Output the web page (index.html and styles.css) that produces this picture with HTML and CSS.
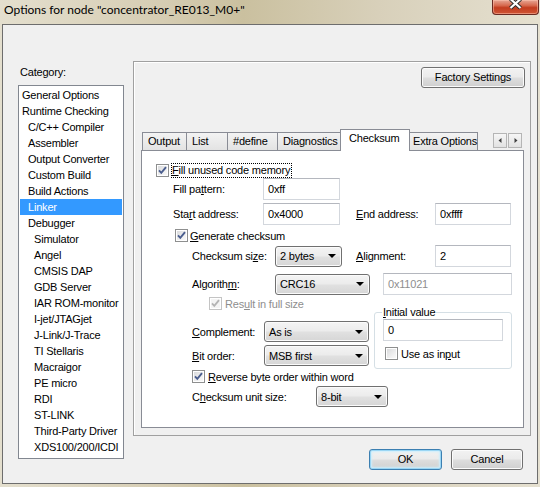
FILE: index.html
```html
<!DOCTYPE html>
<html>
<head>
<meta charset="utf-8">
<link rel="stylesheet" href="styles.css">
</head>
<body>
<div class="window">
  <div class="titlebar">
    <span class="title">Options for node "concentrator_RE013_M0+"</span>
    <div class="close">
      <svg width="45" height="14" viewBox="0 0 45 14"><path d="M17.5 -1 L27.5 8 M27.5 -1 L17.5 8" stroke="#2e2e2e" stroke-width="4.2" fill="none"/><path d="M17.5 -1 L27.5 8 M27.5 -1 L17.5 8" stroke="#fff" stroke-width="2.2" fill="none"/></svg>
    </div>
  </div>
  <div class="client">
    <div class="left">
      <div class="cat-label">Category:</div>
      <ul class="cat-list">
        <li class="l0">General Options</li>
        <li class="l0">Runtime Checking</li>
        <li class="l1">C/C++ Compiler</li>
        <li class="l1">Assembler</li>
        <li class="l1">Output Converter</li>
        <li class="l1">Custom Build</li>
        <li class="l1">Build Actions</li>
        <li class="l1 sel">Linker</li>
        <li class="l1">Debugger</li>
        <li class="l2">Simulator</li>
        <li class="l2">Angel</li>
        <li class="l2">CMSIS DAP</li>
        <li class="l2">GDB Server</li>
        <li class="l2">IAR ROM-monitor</li>
        <li class="l2">I-jet/JTAGjet</li>
        <li class="l2">J-Link/J-Trace</li>
        <li class="l2">TI Stellaris</li>
        <li class="l2">Macraigor</li>
        <li class="l2">PE micro</li>
        <li class="l2">RDI</li>
        <li class="l2">ST-LINK</li>
        <li class="l2">Third-Party Driver</li>
        <li class="l2">XDS100/200/ICDI</li>
      </ul>
    </div>
    <div class="right">
      <div class="panel">
        <div class="factory-row"><div class="btn factory">Factory Settings</div></div>
        <div class="tabs">
          <div class="tab t-output">Output</div>
          <div class="tab t-list">List</div>
          <div class="tab t-define">#define</div>
          <div class="tab t-diag">Diagnostics</div>
          <div class="tab t-check sel">Checksum</div>
          <div class="tab t-extra">Extra Options</div>
          <div class="spin">
            <div class="spin-btn"><svg width="13" height="13" viewBox="0 0 13 13"><path d="M7.5 4 L4.5 6.5 L7.5 9 Z" fill="#404040"/></svg></div>
            <div class="spin-btn"><svg width="13" height="13" viewBox="0 0 13 13"><path d="M5.5 4 L8.5 6.5 L5.5 9 Z" fill="#404040"/></svg></div>
          </div>
        </div>
        <div class="tab-content">
          <div class="row r-fill">
            <span class="cb"><svg width="11" height="11" viewBox="0 0 11 11"><path d="M2 5.3 L4.3 7.8 L9 2.2" fill="none" stroke="#4a5d8e" stroke-width="1.9"/></svg></span>
            <span class="focus"><u>F</u>ill unused code memory</span>
          </div>
          <div class="row r-pattern">
            <span class="lab lab-a">Fill pa<u>t</u>tern:</span>
            <div class="tb w77">0xff</div>
          </div>
          <div class="row r-start">
            <span class="lab lab-a">Sta<u>r</u>t address:</span>
            <div class="tb w77">0x4000</div>
            <span class="lab lab-b"><u>E</u>nd address:</span>
            <div class="tb w76">0xffff</div>
          </div>
          <div class="row r-gen">
            <span class="cb"><svg width="11" height="11" viewBox="0 0 11 11"><path d="M2 5.3 L4.3 7.8 L9 2.2" fill="none" stroke="#4a5d8e" stroke-width="1.9"/></svg></span>
            <span class="cb-text"><u>G</u>enerate checksum</span>
          </div>
          <div class="row r-size">
            <span class="lab lab-c">Checksum si<u>z</u>e:</span>
            <div class="combo w67"><span>2 bytes</span><i class="arr"></i></div>
            <span class="lab lab-d"><u>A</u>lignment:</span>
            <div class="tb w76">2</div>
          </div>
          <div class="row r-alg">
            <span class="lab lab-c">Algorith<u>m</u>:</span>
            <div class="combo w95"><span>CRC16</span><i class="arr"></i></div>
            <div class="tb w129 dis">0x11021</div>
          </div>
          <div class="row r-result">
            <span class="cb dis"><svg width="11" height="11" viewBox="0 0 11 11"><path d="M2 5.3 L4.3 7.8 L9 2.2" fill="none" stroke="#b4b4b4" stroke-width="1.9"/></svg></span>
            <span class="cb-text dis">Res<u>u</u>lt in full size</span>
          </div>
          <div class="blk">
            <div class="blk-left">
              <div class="row r-comp">
                <span class="lab lab-e"><u>C</u>omplement:</span>
                <div class="combo w105"><span>As is</span><i class="arr"></i></div>
              </div>
              <div class="row r-bit">
                <span class="lab lab-e"><u>B</u>it order:</span>
                <div class="combo w105"><span>MSB first</span><i class="arr"></i></div>
              </div>
            </div>
            <fieldset class="group">
              <legend><u>I</u>nitial value</legend>
              <div class="tb w120">0</div>
              <div class="row r-use">
                <span class="cb"></span>
                <span class="cb-text">Use as in<u>p</u>ut</span>
              </div>
            </fieldset>
          </div>
          <div class="row r-rev">
            <span class="cb"><svg width="11" height="11" viewBox="0 0 11 11"><path d="M2 5.3 L4.3 7.8 L9 2.2" fill="none" stroke="#4a5d8e" stroke-width="1.9"/></svg></span>
            <span class="cb-text"><u>R</u>everse byte order within word</span>
          </div>
          <div class="row r-unit">
            <span class="lab lab-f">C<u>h</u>ecksum unit size:</span>
            <div class="combo w72"><span>8-bit</span><i class="arr"></i></div>
          </div>
        </div>
      </div>
      <div class="actions">
        <div class="btn ok">OK</div>
        <div class="btn cancel">Cancel</div>
      </div>
    </div>
  </div>
</div>
</body>
</html>
```

FILE: styles.css
```css
* { box-sizing: border-box; }
html, body { margin: 0; padding: 0; }
body {
  width: 540px;
  height: 487px;
  overflow: hidden;
  font-family: "Liberation Sans", Arial, sans-serif;
  font-size: 11px;
  letter-spacing: -0.2px;
  color: #000;
  background: #ddd7c5;
}
u { text-decoration: underline; text-underline-offset: 1px; }

.window {
  width: 540px;
  height: 487px;
  background: linear-gradient(to right, #e4dfce 0%, #d6cdb3 30%, #cac09f 45%, #d8d0ba 70%, #e5e0d0 100%);
}

/* title bar */
.titlebar {
  height: 24px;
  display: flex;
  align-items: flex-start;
}
.title {
  font-family: Lato, "Open Sans", sans-serif;
  font-size: 12px;
  letter-spacing: 0;
  line-height: 20px;
  padding-left: 4px;
  white-space: nowrap;
}
.close {
  margin-left: auto;
  margin-right: 1px;
  width: 47px;
  height: 15px;
  border: 1px solid #6a2a22;
  border-top: none;
  border-radius: 0 0 4px 4px;
  background: linear-gradient(#e7a795 0%, #d6684d 40%, #c33d20 55%, #cf5535 100%);
  box-shadow: inset 0 0 0 1px rgba(255, 200, 180, 0.5);
}
.close svg { display: block; }

/* client area */
.client {
  margin-left: 2px;
  width: 536px;
  height: 460px;
  border: 1px solid #6d6d6d;
  background: #f0f0f0;
  display: flex;
  padding-top: 36px;
}

.left {
  margin-left: 15px;
  width: 106px;
}
.cat-label {
  margin-top: 5px;
  padding-left: 2px;
  height: 13px;
  line-height: 13px;
}
.cat-list {
  list-style: none;
  margin: 6px 0 0 0;
  padding: 1px;
  height: 374px;
  border: 1px solid #828790;
  background: #fff;
  overflow: hidden;
}
.cat-list li {
  height: 16px;
  line-height: 16px;
  white-space: nowrap;
  overflow: hidden;
  margin: 0;
}
.cat-list .l0 { padding-left: 2px; }
.cat-list .l1 { padding-left: 8px; }
.cat-list .l2 { padding-left: 14px; }
.cat-list .sel { background: #3399ff; color: #fff; }

/* right column */
.right {
  margin-left: 9px;
  width: 398px;
}
.panel {
  width: 398px;
  height: 375px;
  border: 1px solid #a0a0a0;
  box-shadow: inset 1px 1px 0 #fff;
  padding: 5px 5px 0 0;
}
.factory-row {
  display: flex;
  justify-content: flex-end;
}
.btn {
  height: 21px;
  line-height: 19px;
  text-align: center;
  border: 1px solid #707070;
  border-radius: 3px;
  background: linear-gradient(#f2f2f2 0%, #ebebeb 45%, #dddddd 55%, #cfcfcf 100%);
  box-shadow: inset 0 0 0 1px #fbfbfb;
}
.factory { width: 104px; }

/* tabs */
.tabs {
  margin: 41px 0 0 7px;
  width: 383px;
  height: 21px;
  display: flex;
  align-items: flex-end;
}
.tab {
  height: 18px;
  line-height: 16px;
  border: 1px solid #898c95;
  border-bottom: none;
  background: linear-gradient(#f3f3f3, #e3e3e3);
  padding-left: 5px;
  white-space: nowrap;
}
.t-output { width: 45px; margin-left: 1px; }
.t-list { width: 42px; margin-left: -1px; }
.t-define { width: 51px; margin-left: -1px; }
.t-diag { width: 66px; margin-left: -1px; }
.t-check { width: 70px; margin-left: -3px; }
.t-extra { width: 71px; margin-left: -3px; }
.tab.sel {
  height: 22px;
  margin-bottom: -1px;
  background: #fff;
  position: relative;
  z-index: 1;
  line-height: 17px;
  padding-left: 8px;
}
.spin {
  margin-left: auto;
  margin-right: 2px;
  align-self: flex-start;
  margin-top: 4px;
  display: flex;
  gap: 1px;
}
.spin-btn {
  width: 14px;
  height: 15px;
  border: 1px solid #b5b5b5;
  background: linear-gradient(#f6f6f6, #e2e2e2);
}
.spin-btn svg { display: block; }

.tab-content {
  margin-left: 7px;
  width: 383px;
  height: 278px;
  border: 1px solid #898c95;
  background: #fff;
  padding-top: 12px;
}

.row {
  display: flex;
  align-items: center;
  white-space: nowrap;
}

/* checkboxes */
.cb {
  flex: none;
  width: 13px;
  height: 13px;
  border: 1px solid #8e8f8f;
  background: linear-gradient(135deg, #d6d7d9 0%, #f3f3f3 70%, #fafafa 100%);
  box-shadow: inset 0 0 0 1px #fff;
}
.cb svg { display: block; }
.cb.dis { border-color: #c4c4c4; background: #f4f4f4; }
.cb-text { margin-left: 3px; }
.dis { color: #8e8e8e; }

.focus {
  margin-left: 2px;
  height: 15px;
  line-height: 13px;
  border: 1px dotted #000;
  padding-right: 1px;
}

.lab { flex: none; }
.lab-a { margin-left: 31px; width: 90px; }
.lab-b { margin-left: 16px; width: 79px; }
.lab-c { margin-left: 50px; width: 83px; }
.lab-d { margin-left: 14px; width: 79px; }
.lab-e { margin-left: 50px; width: 72px; }
.lab-f { margin-left: 50px; width: 124px; }

/* text boxes */
.tb {
  flex: none;
  height: 22px;
  line-height: 20px;
  padding-left: 4px;
  border: 1px solid #d3d7dd;
  border-top-color: #b4b7be;
  background: #fff;
}
.w76 { width: 76px; }
.w77 { width: 77px; }
.w120 { width: 120px; }
.w129 { width: 129px; }

/* combos */
.combo {
  flex: none;
  height: 21px;
  display: flex;
  align-items: center;
  justify-content: space-between;
  padding: 0 5px 0 4px;
  border: 1px solid #707070;
  border-radius: 3px;
  background: linear-gradient(#f4f4f4 0%, #ececec 45%, #e0e0e0 55%, #d6d6d6 100%);
  box-shadow: inset 0 0 0 1px #fbfbfb;
}
.arr {
  width: 0;
  height: 0;
  border-left: 4px solid transparent;
  border-right: 4px solid transparent;
  border-top: 4px solid #000;
}
.w67 { width: 67px; }
.w72 { width: 72px; }
.w95 { width: 95px; }
.w105 { width: 105px; }

/* rows */
.r-fill { height: 15px; padding-left: 14px; }
.r-pattern { height: 22px; margin-top: 0; }
.r-start { height: 22px; margin-top: 3px; }
.r-gen { height: 15px; margin-top: 3px; padding-left: 33px; }
.r-gen .cb-text { margin-left: 2px; }
.r-size { height: 22px; margin-top: 2px; }
.r-alg { height: 22px; margin-top: 6px; }
.r-alg .tb { margin-left: 13px; }
.r-result { height: 13px; margin-top: 2px; padding-left: 67px; }

.blk {
  display: flex;
  margin-top: -4px;
}
.blk-left { width: 231px; }
.r-comp { height: 21px; margin-top: 15px; }
.r-bit { height: 21px; margin-top: 3px; }

.group {
  margin: 0 0 0 1px;
  width: 138px;
  height: 63px;
  padding: 0 8px;
  border: 1px solid #d5dfe5;
  border-radius: 3px;
}
.group legend {
  padding: 0 1px;
  margin-left: -1px;
  line-height: 13px;
  font-size: 11px;
}
.r-use { height: 15px; margin-top: 5px; padding-left: 2px; }

.r-rev { height: 15px; margin-top: 0; padding-left: 50px; }
.r-unit { height: 21px; margin-top: 2px; }

/* dialog buttons */
.actions {
  margin-top: 13px;
  display: flex;
  justify-content: flex-end;
  gap: 9px;
  padding-right: 8px;
}
.ok {
  width: 73px;
  border-color: #3c7fb1;
  box-shadow: inset 0 0 0 1px #9ad6f4, inset 0 0 2px 2px #cdeefc;
}
.cancel { width: 72px; }
```
